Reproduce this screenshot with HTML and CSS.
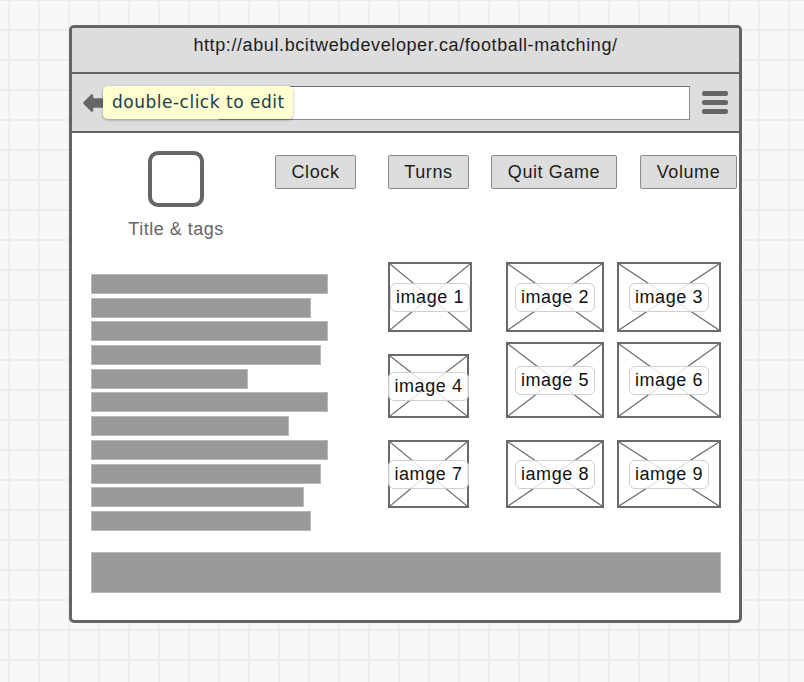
FILE: index.html
```html
<!DOCTYPE html>
<html lang="en">
<head>
    <meta charset="UTF-8">
    <meta name="viewport" content="width=device-width, initial-scale=1.0">
    <title>Football Matching - Wireframe</title>
    <link rel="stylesheet" href="styles.css">
</head>
<body>
    <div class="window">
        <div class="titlebar">http://abul.bcitwebdeveloper.ca/football-matching/</div>

        <div class="navbar">
            <svg class="back-arrow" width="20" height="20" viewBox="0 0 20 20">
                <path d="M1.5 10 L9 2.5 L9 6.5 L19 6.5 L19 13.5 L9 13.5 L9 17.5 Z" fill="#666" stroke="#666" stroke-width="2.5" stroke-linejoin="round"/>
            </svg>
            <div class="nav-icons">
                <svg width="20" height="20" viewBox="0 0 20 20">
                    <path d="M3 3 L17 17 M17 3 L3 17" stroke="#666" stroke-width="3" stroke-linecap="round"/>
                </svg>
                <svg width="20" height="20" viewBox="0 0 20 20">
                    <path d="M16 6 A7 7 0 1 0 17 12" fill="none" stroke="#666" stroke-width="3" stroke-linecap="round"/>
                </svg>
            </div>
            <div class="address"></div>
            <div class="menu">
                <span></span>
                <span></span>
                <span></span>
            </div>
            <div class="tooltip">double-click to edit</div>
        </div>

        <div class="content">
            <div class="top-row">
                <div class="title-block">
                    <div class="title-icon"></div>
                    <div class="title-label">Title &amp; tags</div>
                </div>
                <div class="buttons">
                    <button class="btn btn-clock">Clock</button>
                    <button class="btn btn-turns">Turns</button>
                    <button class="btn btn-quit">Quit Game</button>
                    <button class="btn btn-volume">Volume</button>
                </div>
            </div>

            <div class="main-row">
                <div class="text-lines">
                    <div class="line" style="width: 237px"></div>
                    <div class="line" style="width: 220px"></div>
                    <div class="line" style="width: 237px"></div>
                    <div class="line" style="width: 230px"></div>
                    <div class="line" style="width: 157px"></div>
                    <div class="line" style="width: 237px"></div>
                    <div class="line" style="width: 198px"></div>
                    <div class="line" style="width: 237px"></div>
                    <div class="line" style="width: 230px"></div>
                    <div class="line" style="width: 213px"></div>
                    <div class="line" style="width: 220px"></div>
                </div>

                <div class="image-grid">
                    <div class="ph ph-1">
                        <svg class="ph-cross" viewBox="0 0 100 100" preserveAspectRatio="none"><path d="M0 0 L100 100 M100 0 L0 100"/></svg>
                        <span class="ph-label">image 1</span>
                    </div>
                    <div class="ph ph-2">
                        <svg class="ph-cross" viewBox="0 0 100 100" preserveAspectRatio="none"><path d="M0 0 L100 100 M100 0 L0 100"/></svg>
                        <span class="ph-label">image 2</span>
                    </div>
                    <div class="ph ph-3">
                        <svg class="ph-cross" viewBox="0 0 100 100" preserveAspectRatio="none"><path d="M0 0 L100 100 M100 0 L0 100"/></svg>
                        <span class="ph-label">image 3</span>
                    </div>
                    <div class="ph ph-4">
                        <svg class="ph-cross" viewBox="0 0 100 100" preserveAspectRatio="none"><path d="M0 0 L100 100 M100 0 L0 100"/></svg>
                        <span class="ph-label">image 4</span>
                    </div>
                    <div class="ph ph-5">
                        <svg class="ph-cross" viewBox="0 0 100 100" preserveAspectRatio="none"><path d="M0 0 L100 100 M100 0 L0 100"/></svg>
                        <span class="ph-label">image 5</span>
                    </div>
                    <div class="ph ph-6">
                        <svg class="ph-cross" viewBox="0 0 100 100" preserveAspectRatio="none"><path d="M0 0 L100 100 M100 0 L0 100"/></svg>
                        <span class="ph-label">image 6</span>
                    </div>
                    <div class="ph ph-7">
                        <svg class="ph-cross" viewBox="0 0 100 100" preserveAspectRatio="none"><path d="M0 0 L100 100 M100 0 L0 100"/></svg>
                        <span class="ph-label">iamge 7</span>
                    </div>
                    <div class="ph ph-8">
                        <svg class="ph-cross" viewBox="0 0 100 100" preserveAspectRatio="none"><path d="M0 0 L100 100 M100 0 L0 100"/></svg>
                        <span class="ph-label">iamge 8</span>
                    </div>
                    <div class="ph ph-9">
                        <svg class="ph-cross" viewBox="0 0 100 100" preserveAspectRatio="none"><path d="M0 0 L100 100 M100 0 L0 100"/></svg>
                        <span class="ph-label">iamge 9</span>
                    </div>
                </div>
            </div>

            <div class="footer-bar"></div>
        </div>
    </div>
</body>
</html>
```

FILE: styles.css
```css
* {
    margin: 0;
    padding: 0;
    box-sizing: border-box;
}

body {
    font-family: 'Liberation Sans', Arial, Helvetica, sans-serif;
    background-color: #f8f8f8;
    background-image:
        linear-gradient(to right, #eeeeee 2px, transparent 2px),
        linear-gradient(to bottom, #eeeeee 2px, transparent 2px);
    background-size: 30px 30px;
    background-position: 8px 29px;
    min-height: 100vh;
    padding: 25px 0 0 69px;
    color: #222;
}

.window {
    width: 673px;
    height: 598px;
    border: 3px solid #646464;
    border-radius: 5px;
    background: #fff;
    overflow: hidden;
    display: flex;
    flex-direction: column;
}

/* browser chrome */
.titlebar {
    height: 46px;
    background: #dddddd;
    border-bottom: 2px solid #646464;
    text-align: center;
    font-size: 18px;
    letter-spacing: 0.6px;
    line-height: 20px;
    padding-top: 7px;
    color: #1c1c1c;
}

.navbar {
    position: relative;
    height: 59px;
    background: #dddddd;
    border-bottom: 2px solid #646464;
    display: flex;
    align-items: center;
    padding: 0 11px 0 11px;
}

.back-arrow {
    flex-shrink: 0;
}

.nav-icons {
    width: 104px;
    margin-right: 12px;
    display: flex;
    gap: 24px;
    padding-left: 22px;
    opacity: 0.5;
}

.address {
    flex: 1;
    height: 34px;
    background: #fff;
    border: 1px solid #8a8a8a;
    border-top-color: #6e6e6e;
}

.menu {
    width: 26px;
    margin-left: 12px;
    display: flex;
    flex-direction: column;
    gap: 4px;
}

.menu span {
    display: block;
    height: 5px;
    border-radius: 2px;
    background: #666;
}

.tooltip {
    position: absolute;
    left: 31px;
    top: 12px;
    width: 190px;
    height: 33px;
    background: rgba(255, 255, 207, 0.96);
    border-radius: 5px;
    box-shadow: 0 1px 3px rgba(0, 0, 0, 0.35);
    font-family: 'DejaVu Sans', Verdana, sans-serif;
    font-size: 17px;
    letter-spacing: 0.5px;
    line-height: 33px;
    color: #1d3d4b;
    padding-left: 9px;
}

/* page content */
.content {
    flex: 1;
    padding: 18px 0 0 19px;
}

.top-row {
    display: flex;
    align-items: flex-start;
}

.title-block {
    width: 170px;
    display: flex;
    flex-direction: column;
    align-items: center;
}

.title-icon {
    width: 56px;
    height: 56px;
    border: 4px solid #666;
    border-radius: 10px;
}

.title-label {
    margin-top: 12px;
    font-size: 18px;
    line-height: 20px;
    letter-spacing: 0.5px;
    color: #666;
}

.buttons {
    display: flex;
    margin-top: 4px;
    margin-left: 14px;
}

.btn {
    height: 34px;
    background: #dddddd;
    border: 1px solid #8a8a8a;
    border-radius: 2px;
    font-family: inherit;
    font-size: 18px;
    letter-spacing: 0.6px;
    color: #1c1c1c;
}

.btn-clock { width: 81px; }
.btn-turns { width: 81px; margin-left: 32px; }
.btn-quit { width: 126px; margin-left: 22px; }
.btn-volume { width: 97px; margin-left: 23px; }

.main-row {
    display: flex;
    margin-top: 23px;
}

.text-lines {
    width: 297px;
    margin-top: 12px;
    display: flex;
    flex-direction: column;
    gap: 3.7px;
}

.line {
    height: 20px;
    background: #999;
    border: 1px solid #b8b8b8;
}

.image-grid {
    display: grid;
    grid-template-columns: 118px 111px 103px;
    grid-template-rows: 80px 98px 67px;
    align-items: start;
}

.ph {
    position: relative;
    border: 2px solid #6a6a6a;
    display: flex;
    align-items: center;
    justify-content: center;
}

.ph-cross {
    position: absolute;
    inset: 0;
    width: 100%;
    height: 100%;
}

.ph-cross path {
    stroke: #6a6a6a;
    stroke-width: 1.2;
    vector-effect: non-scaling-stroke;
    fill: none;
}

.ph-label {
    position: relative;
    background: rgba(255, 255, 255, 0.82);
    border: 1px solid #cfcfcf;
    border-radius: 6px;
    padding: 2px 5px 3px;
    font-size: 18px;
    line-height: 22px;
    letter-spacing: 0.6px;
    color: #111;
    white-space: nowrap;
}

.ph-1 { width: 84px; height: 70px; }
.ph-2 { width: 98px; height: 70px; }
.ph-3 { width: 104px; height: 70px; }
.ph-4 { width: 81px; height: 64px; margin-top: 12px; }
.ph-5 { width: 98px; height: 76px; }
.ph-6 { width: 104px; height: 76px; }
.ph-7 { width: 81px; height: 68px; }
.ph-8 { width: 98px; height: 68px; }
.ph-9 { width: 104px; height: 68px; }

.footer-bar {
    width: 630px;
    height: 41px;
    margin-top: 21px;
    background: #999;
    border: 1px solid #b8b8b8;
}
```
